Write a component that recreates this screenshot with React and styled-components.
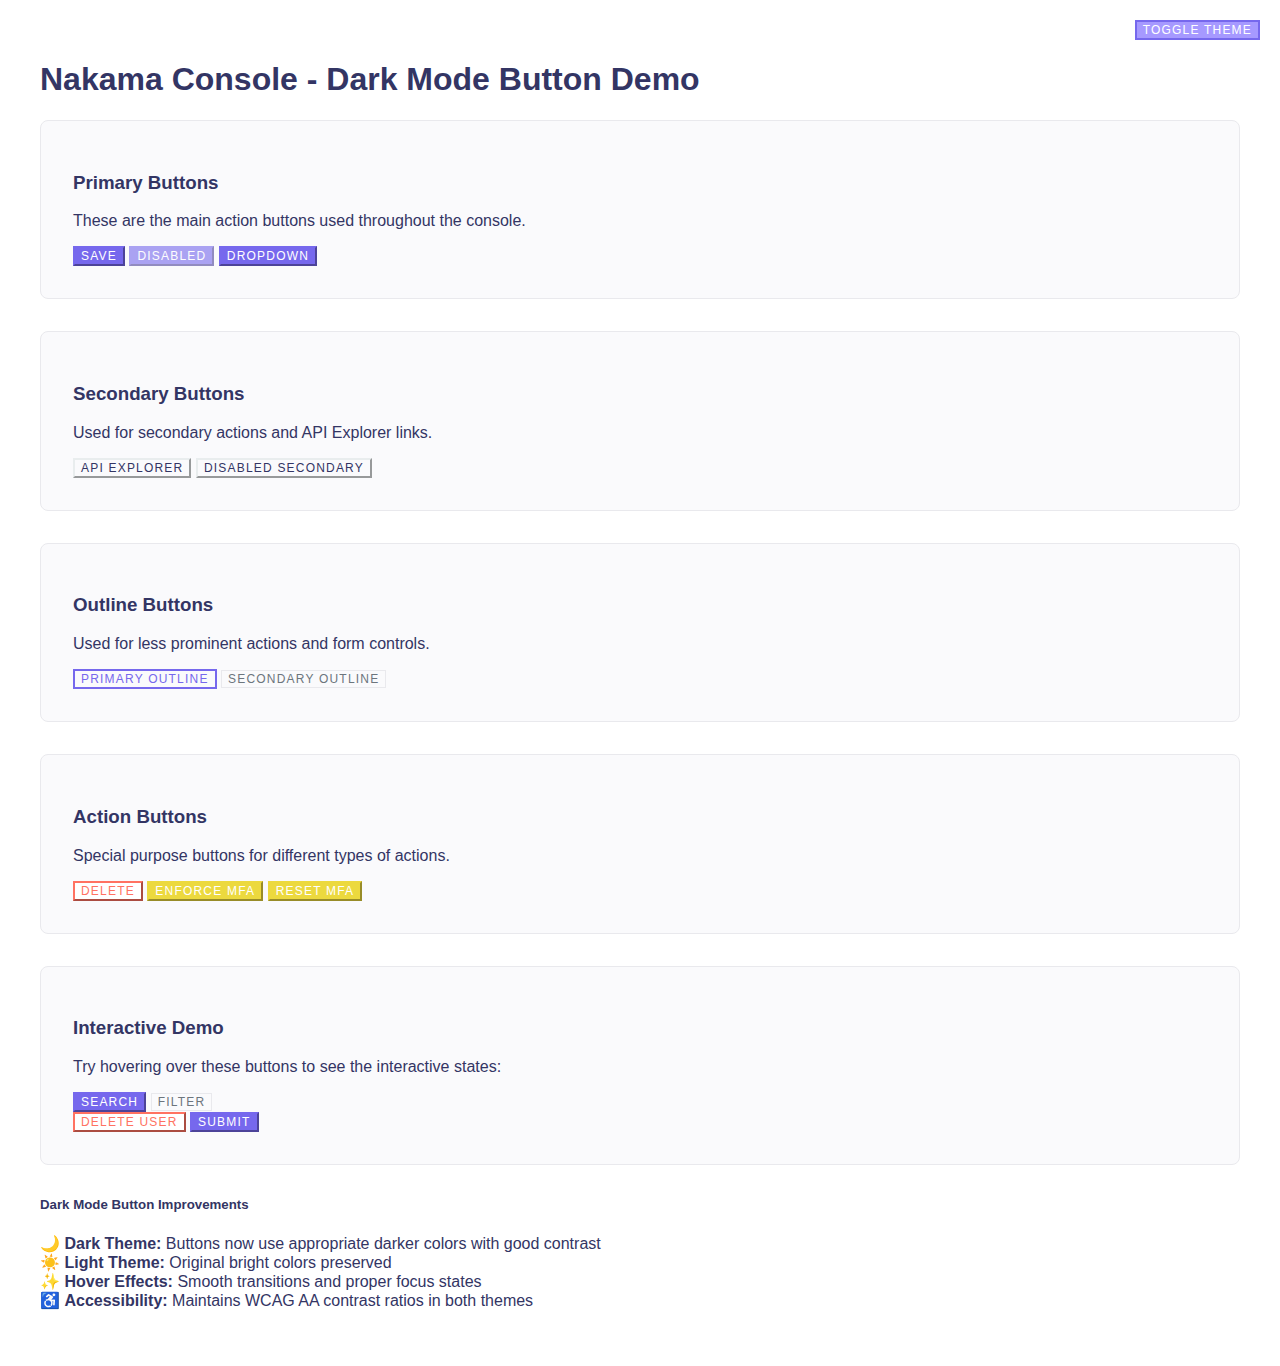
import React from "react";
import styled, { createGlobalStyle, css } from "styled-components";

const GlobalStyle = createGlobalStyle`
  body {
    margin: 0;
    padding: 40px;
    background: #fff;
    color: #333564;
    font-family: "Liberation Sans", Arial, sans-serif;
    font-size: 16px;
  }
`;

const variants = {
  primary: css`
    background: #7668ed;
    border-color: #7668ed;
    color: #fff;
  `,
  toggle: css`
    background: #a699ff;
    border: 2px solid #7668ed;
    color: #fff;
  `,
  secondary: css`
    background: #fafafc;
    border-color: #e9edee;
    color: #333564;
  `,
  outline: css`
    background: #fafafc;
    border: 2px solid #7668ed;
    color: #7668ed;
  `,
  outlineSecondary: css`
    background: #fafafc;
    border: 1px solid #e9e9ed;
    color: #6c757d;
  `,
  danger: css`
    background: #fff;
    border-color: #ff7262;
    color: #ff7262;
  `,
  warning: css`
    background: #ecd93e;
    border-color: #ecd93e;
    color: #fff;
  `,
};

const Button = styled.button`
  padding: 1px 6px;
  border: 2px outset;
  border-radius: 0;
  font-family: inherit;
  font-size: 12px;
  letter-spacing: 1.2px;
  text-transform: uppercase;
  ${({ $variant }) => variants[$variant]}

  &:disabled {
    opacity: 0.6;
  }
`;

const ThemeToggle = styled.div`
  position: fixed;
  top: 20px;
  right: 20px;
  font-size: 12px;
  display: flex;
`;

const Title = styled.h1`
  margin: 21.44px 0;
  font-size: 32px;
`;

const Section = styled.section`
  margin-bottom: 32px;
  padding: 32px;
  border: 1px solid #e9e9ed;
  border-radius: 8px;
  background: #fafafc;
`;

const Heading = styled.h3`
  margin: 18.72px 0;
  font-size: 18.72px;
`;

const Description = styled.p`
  margin: 16px 0;
`;

const NotesTitle = styled.h5`
  margin: 0 0 22.18px;
  font-size: 13.28px;
`;

const ButtonRow = styled.div``;

function DemoSection({ title, description, rows }) {
  return (
    <Section>
      <Heading>{title}</Heading>
      <Description>{description}</Description>
      {rows.map((row, i) => (
        <ButtonRow key={i}>
          {row.map(([label, variant, disabled]) => (
            <React.Fragment key={label}>
              <Button $variant={variant} disabled={disabled}>{label}</Button>{" "}
            </React.Fragment>
          ))}
        </ButtonRow>
      ))}
    </Section>
  );
}

const sections = [
  {
    title: "Primary Buttons",
    description: "These are the main action buttons used throughout the console.",
    rows: [[["Save", "primary"], ["Disabled", "primary", true], ["Dropdown", "primary"]]],
  },
  {
    title: "Secondary Buttons",
    description: "Used for secondary actions and API Explorer links.",
    rows: [[["API Explorer", "secondary"], ["Disabled Secondary", "secondary"]]],
  },
  {
    title: "Outline Buttons",
    description: "Used for less prominent actions and form controls.",
    rows: [[["Primary Outline", "outline"], ["Secondary Outline", "outlineSecondary"]]],
  },
  {
    title: "Action Buttons",
    description: "Special purpose buttons for different types of actions.",
    rows: [[["Delete", "danger"], ["Enforce MFA", "warning"], ["Reset MFA", "warning"]]],
  },
  {
    title: "Interactive Demo",
    description: "Try hovering over these buttons to see the interactive states:",
    rows: [
      [["Search", "primary"], ["Filter", "outlineSecondary"]],
      [["Delete User", "danger"], ["Submit", "primary"]],
    ],
  },
];

const notes = [
  ["🌙", "Dark Theme:", "Buttons now use appropriate darker colors with good contrast"],
  ["☀️", "Light Theme:", "Original bright colors preserved"],
  ["✨", "Hover Effects:", "Smooth transitions and proper focus states"],
  ["♿", "Accessibility:", "Maintains WCAG AA contrast ratios in both themes"],
];

const Note = styled.div``;

export default function App() {
  return (
    <>
      <GlobalStyle />
      <ThemeToggle>
        <Button $variant="toggle">Toggle Theme</Button>
      </ThemeToggle>
      <Title>Nakama Console - Dark Mode Button Demo</Title>
      {sections.map((section) => (
        <DemoSection key={section.title} {...section} />
      ))}
      <NotesTitle>Dark Mode Button Improvements</NotesTitle>
      {notes.map(([icon, label, text]) => (
        <Note key={label}>
          {icon} <strong>{label}</strong> {text}
        </Note>
      ))}
    </>
  );
}
